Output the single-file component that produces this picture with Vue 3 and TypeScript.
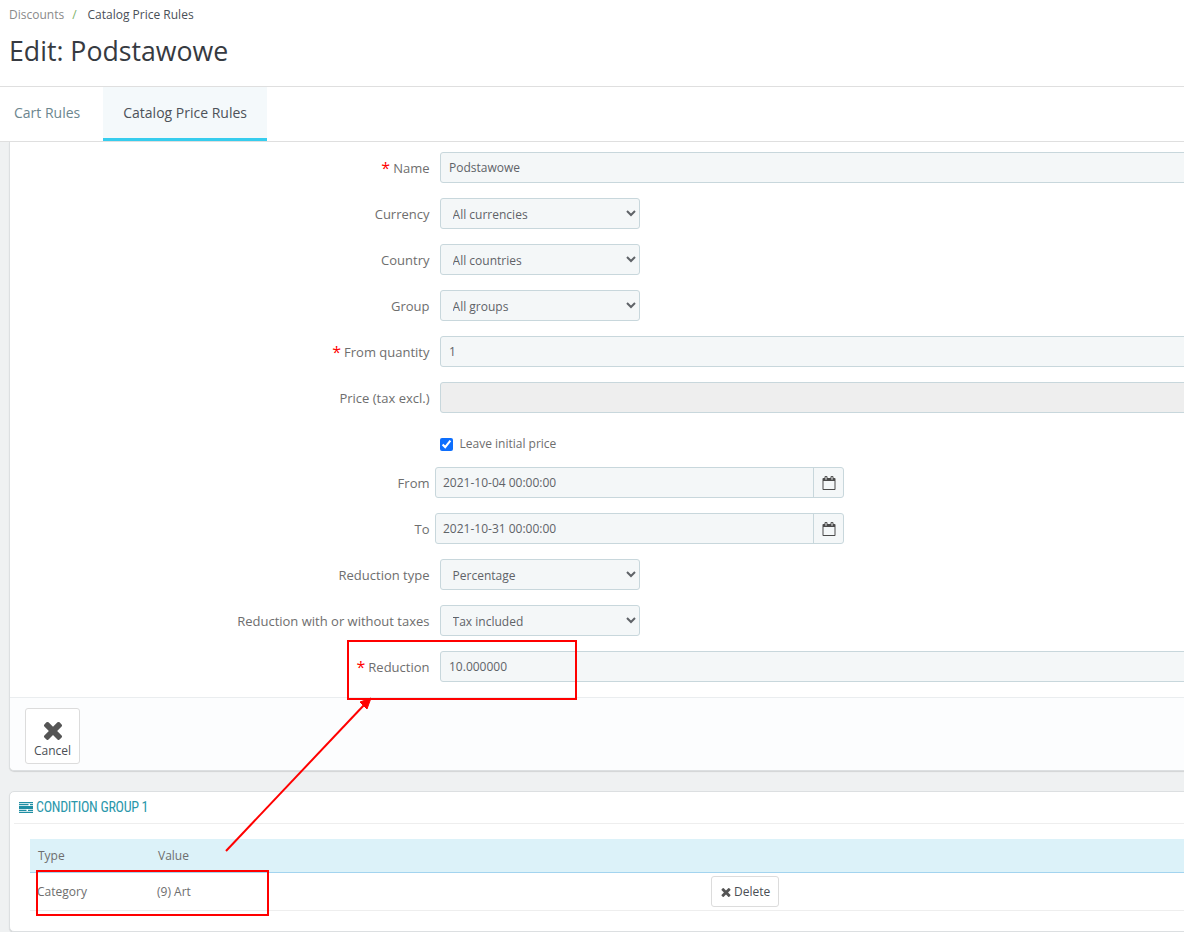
<script setup lang="ts">
interface Row {
  label: string
  required?: boolean
  kind: 'input' | 'select' | 'disabled' | 'check' | 'date'
  value: string
}

const calendarPath =
  'M192 1664h1408v-1024h-1408v1024zm384-1216v-288q0-14-9-23t-23-9h-64q-14 0-23 9t-9 23v288q0 14 9 23t23 9h64q14 0 23-9t9-23zm768 0v-288q0-14-9-23t-23-9h-64q-14 0-23 9t-9 23v288q0 14 9 23t23 9h64q14 0 23-9t9-23zm384-64v1280q0 52-38 90t-90 38h-1408q-52 0-90-38t-38-90v-1280q0-52 38-90t90-38h128v-96q0-66 47-113t113-47h64q66 0 113 47t47 113v96h384v-96q0-66 47-113t113-47h64q66 0 113 47t47 113v96h128q52 0 90 38t38 90z'
const timesPath =
  'M1490 1322q0 40-28 68l-136 136q-28 28-68 28t-68-28l-294-294-294 294q-28 28-68 28t-68-28l-136-136q-28-28-28-68t28-68l294-294-294-294q-28-28-28-68t28-68l136-136q28-28 68-28t68 28l294 294 294-294q28-28 68-28t68 28l136 136q28 28 28 68t-28 68l-294 294 294 294q28 28 28 68z'

const rows: Row[] = [
  { label: 'Name', required: true, kind: 'input', value: 'Podstawowe' },
  { label: 'Currency', kind: 'select', value: 'All currencies' },
  { label: 'Country', kind: 'select', value: 'All countries' },
  { label: 'Group', kind: 'select', value: 'All groups' },
  { label: 'From quantity', required: true, kind: 'input', value: '1' },
  { label: 'Price (tax excl.)', kind: 'disabled', value: '' },
  { label: '', kind: 'check', value: 'Leave initial price' },
  { label: 'From', kind: 'date', value: '2021-10-04 00:00:00' },
  { label: 'To', kind: 'date', value: '2021-10-31 00:00:00' },
  { label: 'Reduction type', kind: 'select', value: 'Percentage' },
  { label: 'Reduction with or without taxes', kind: 'select', value: 'Tax included' },
  { label: 'Reduction', required: true, kind: 'input', value: '10.000000' },
]
</script>

<template>
  <div class="page">
    <header class="head">
      <nav class="crumbs">
        <span class="crumb-link">Discounts</span>
        <span class="crumb-sep">/</span>
        <span class="crumb-cur">Catalog Price Rules</span>
      </nav>
      <h1 class="title">Edit: Podstawowe</h1>
    </header>

    <div class="tabs">
      <a class="tab">Cart Rules</a>
      <a class="tab active">Catalog Price Rules</a>
    </div>

    <main class="content">
      <section class="panel form-panel">
        <div class="form-body">
          <div v-for="row in rows" :key="row.label + row.value" class="row" :class="'row-' + row.kind">
            <label class="label"><span v-if="row.required" class="req">*</span>{{ row.label }}</label>
            <input v-if="row.kind === 'input'" class="control wide" type="text" :value="row.value" />
            <input v-else-if="row.kind === 'disabled'" class="control wide off" type="text" disabled />
            <select v-else-if="row.kind === 'select'" class="control sel">
              <option>{{ row.value }}</option>
            </select>
            <label v-else-if="row.kind === 'check'" class="check">
              <input type="checkbox" checked />
              <span class="check-text">{{ row.value }}</span>
            </label>
            <div v-else class="date">
              <input class="date-input" type="text" :value="row.value" />
              <span class="date-btn">
                <svg class="cal" viewBox="0 0 1792 1792"><path :d="calendarPath" /></svg>
              </span>
            </div>
          </div>
        </div>
        <footer class="form-foot">
          <button class="cancel" type="button">
            <svg class="cancel-x" viewBox="240 240 1312 1312"><path :d="timesPath" /></svg>
            <span>Cancel</span>
          </button>
        </footer>
      </section>

      <section class="panel cond-panel">
        <h3 class="cond-title">
          <svg class="cond-icon" viewBox="0 0 14 11">
            <path d="M0 0h14v1.3H0zM0 1.9h9.5v1.3H0zM11 1.9h3v1.3h-3zM0 3.9h14v3.2H0zM0 7.8h7.5v1.3H0zM9 7.8h5v1.3H9zM0 9.7h14V11H0z" />
          </svg>
          <span class="cond-text">CONDITION GROUP 1</span>
        </h3>
        <div class="table">
          <div class="t-head">
            <span class="c1">Type</span>
            <span class="c2">Value</span>
          </div>
          <div class="t-row">
            <span class="c1">Category</span>
            <span class="c2">(9) Art</span>
            <button class="del" type="button">
              <svg class="del-x" viewBox="240 240 1312 1312"><path :d="timesPath" /></svg>
              Delete
            </button>
          </div>
        </div>
      </section>
    </main>

    <svg class="marks" width="1184" height="932" viewBox="0 0 1184 932">
      <rect x="348" y="641" width="228" height="58" fill="none" stroke="#f00" stroke-width="2" />
      <rect x="37" y="871" width="231" height="44" fill="none" stroke="#f00" stroke-width="2" />
      <line x1="226" y1="851" x2="365" y2="704" stroke="#f00" stroke-width="2" />
      <path d="M371 698 L367 709 L360 702 Z" fill="#f00" stroke="#f00" />
    </svg>
  </div>
</template>

<style>
html,
body {
  margin: 0;
  background: #eff1f2;
}
</style>

<style scoped>
.page {
  position: relative;
  width: 1184px;
  height: 932px;
  overflow: hidden;
  background: #eff1f2;
  font-family: "Open Sans", sans-serif;
  color: #6c868e;
}
.head {
  height: 86px;
  box-sizing: content-box;
  background: #fff;
  border-bottom: 1px solid #dfdfdf;
  padding-left: 9px;
}
.crumbs {
  display: flex;
  height: 29px;
  align-items: center;
  font-size: 12px;
  line-height: 16px;
}
.crumb-link {
  color: #8a8a8a;
}
.crumb-sep {
  color: #7cb26a;
  margin: 0 11px 0 8px;
}
.crumb-cur {
  color: #4a5058;
}
.title {
  margin: 3px 0 0;
  font-size: 26.7px;
  line-height: 37px;
  font-weight: 400;
  color: #363a41;
}
.tabs {
  display: flex;
  height: 54px;
  background: #fff;
  border-bottom: 1px solid #dfdfdf;
}
.tab {
  display: flex;
  align-items: center;
  box-sizing: border-box;
  height: 54px;
  padding: 0 20px 3px;
  font-size: 14px;
  color: #6c868e;
}
.tab:first-child {
  padding: 0 23px 3px 14px;
}
.tab.active {
  background: #f4f9fb;
  color: #4d5259;
  padding-bottom: 0;
  border-bottom: 3px solid #36cdee;
}
.content {
  display: flex;
  flex-direction: column;
  gap: 20px;
  padding-left: 9px;
  margin-right: -40px;
}
.panel {
  background: #fff;
  border: 1px solid #dcdfe1;
  border-radius: 0 0 5px 5px;
  box-shadow: 0 1px 1px rgba(0, 0, 0, 0.12);
}
.form-panel {
  border-top: 0;
}
.form-body {
  padding-top: 10px;
  display: flex;
  flex-direction: column;
  gap: 15px;
  padding-bottom: 15px;
}
.row {
  display: flex;
  align-items: center;
  height: 31px;
}
.row-check {
  height: 24px;
  padding-top: 4px;
  margin-bottom: -4px;
  box-sizing: content-box;
}
.label {
  box-sizing: border-box;
  width: 420px;
  flex: none;
  text-align: right;
  font-size: 13px;
  color: #6e6e6e;
  padding-right: 0.5px;
}
.req {
  color: #f00;
  font-size: 16px;
  line-height: 13px;
  margin-right: 3px;
  vertical-align: -1.5px;
}
.control {
  box-sizing: border-box;
  height: 31px;
  margin-left: 10px;
  border: 1px solid #c8d7dc;
  border-radius: 3px;
  background: #f4f7f8;
  font-family: "Open Sans", sans-serif;
  font-size: 12px;
  color: #5f6368;
  outline: none;
}
.wide {
  flex: 1;
  padding: 0 8px;
}
.off {
  background: #eeeeee;
}
.sel {
  width: 200px;
  padding: 2px 4px 0 7.6px;
}
.check {
  display: flex;
  align-items: center;
  margin-left: 10px;
  font-size: 12px;
  color: #6e6e6e;
}
.check input {
  width: 13px;
  height: 13px;
  margin: 0 6.5px 0 0;
  accent-color: #0d6efd;
}
.check-text {
  margin-top: -2px;
}
.date {
  display: flex;
  box-sizing: border-box;
  width: 409px;
  height: 31px;
  margin-left: 5px;
  border: 1px solid #c8d7dc;
  border-radius: 3px;
  background: #f4f7f8;
}
.date-input {
  flex: 1;
  min-width: 0;
  padding: 0 7px;
  border: 0;
  background: transparent;
  font-family: "Open Sans", sans-serif;
  font-size: 12px;
  color: #5f6368;
  outline: none;
}
.date-btn {
  display: flex;
  align-items: center;
  justify-content: center;
  width: 29px;
  border-left: 1px solid #c8d7dc;
}
.cal {
  width: 14px;
  height: 14px;
  fill: #4a4a4a;
}
.form-foot {
  height: 73px;
  box-sizing: border-box;
  padding: 10px 15px;
  background: #fcfdfe;
  border-top: 1px solid #eaedef;
  border-radius: 0 0 5px 5px;
}
.cancel {
  display: flex;
  flex-direction: column;
  align-items: center;
  box-sizing: border-box;
  width: 55px;
  height: 56px;
  padding: 11px 0 0;
  background: #fff;
  border: 1px solid #dcdcdc;
  border-radius: 3px;
  font-family: "Open Sans", sans-serif;
  font-size: 12px;
  line-height: 14px;
  color: #4a4e55;
}
.cancel-x {
  width: 20px;
  height: 20px;
  fill: #555;
  margin-bottom: 4px;
}
.cond-panel {
  box-sizing: border-box;
  height: 141px;
  border-radius: 5px;
  padding: 0 0 0 20px;
}
.cond-title {
  display: flex;
  align-items: center;
  gap: 3px;
  height: 31px;
  margin: 0 0 15px -16px;
  padding-left: 5px;
  box-sizing: content-box;
  border-bottom: 1px solid #eeeeee;
  font-family: "Liberation Sans Narrow", "Roboto Condensed", Roboto, sans-serif;
  font-size: 14px;
  letter-spacing: -0.3px;
  font-weight: 400;
  color: #2a97ab;
}
.cond-text {
  margin-top: -2px;
}
.cond-icon {
  width: 14px;
  height: 11px;
  fill: #1f8ea3;
}
.table {
  font-size: 12px;
  color: #6e6e6e;
}
.t-head {
  display: flex;
  align-items: center;
  height: 33px;
  background: #dcf2f9;
  border-bottom: 1px solid #a3d4ef;
  padding-left: 8px;
}
.t-row {
  display: flex;
  align-items: center;
  height: 38px;
  box-sizing: border-box;
  border-bottom: 1px solid #eeeeee;
  padding-left: 7px;
}
.c1 {
  width: 120px;
  flex: none;
}
.c2 {
  width: 554px;
  flex: none;
}
.del {
  display: flex;
  align-items: center;
  gap: 3px;
  box-sizing: border-box;
  width: 68px;
  height: 31px;
  padding: 0 0 0 9px;
  background: #fff;
  border: 1px solid #dcdcdc;
  border-radius: 3px;
  font-family: "Open Sans", sans-serif;
  font-size: 12px;
  color: #4a4e55;
}
.del-x {
  width: 10px;
  height: 10px;
  fill: #555;
}
.marks {
  position: absolute;
  left: 0;
  top: 0;
  pointer-events: none;
}
</style>
